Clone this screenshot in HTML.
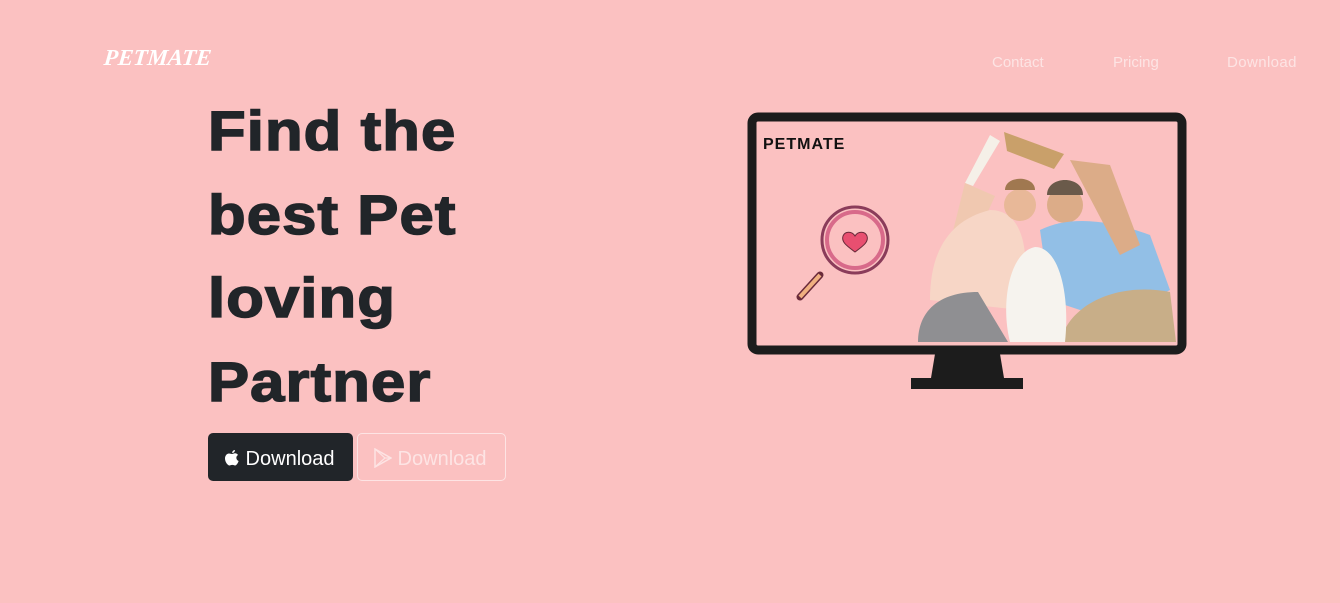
<!DOCTYPE html>
<html><head><style>
body{margin:0;width:1340px;height:603px;background:#fbc1c1;font-family:"Liberation Sans",sans-serif;overflow:hidden;position:relative}
.logo{position:absolute;left:104px;top:45px;color:#fff;font:italic bold 23px "Liberation Serif",serif;transform:skewX(-6deg)}
.nav a{position:absolute;top:54px;color:#fde4e4;font-size:15px;text-decoration:none}
h1{position:absolute;left:208px;top:89px;margin:0;font-size:56px;line-height:83.5px;font-weight:bold;color:#212529;letter-spacing:1px;transform:scaleX(1.1);transform-origin:left top;-webkit-text-stroke:1.5px #212529}
.b1{position:absolute;left:208px;top:433px;width:145px;height:48px;background:#212529;border-radius:5px;color:#fff;font-size:20px;box-sizing:border-box;padding:15px 0 0 16px}
.b2{position:absolute;left:357px;top:433px;width:149px;height:48px;border:1px solid #fde4e4;border-radius:5px;color:#fde4e4;font-size:20px;box-sizing:border-box;padding:14px 0 0 16px}
</style></head><body>
<div class="logo">PETMATE</div>
<div class="nav"><a style="left:992px">Contact</a><a style="left:1113px">Pricing</a><a style="left:1227px;letter-spacing:0.4px">Download</a></div>
<h1>Find the<br>best Pet<br>loving<br>Partner</h1>
<div class="b1"><svg width="16" height="18" viewBox="0 0 16 18" style="vertical-align:-2px"><path d="M11 1c0 1.5-1.2 3-2.8 3C8 2.5 9.4 1 11 1zM8 5c1 0 2-.7 3-.7 1.3 0 2.4.7 3 1.7-2.5 1.4-2 5 .6 6-.6 1.8-2 4.5-3.5 4.5-1 0-1.5-.6-2.8-.6s-1.9.6-2.8.6C3.800 16.500 1 13 1 9.500 1 6.500 3 4.500 5 4.500 6.200 4.500 7 5 8 5z" fill="#fff"/></svg> Download</div>
<div class="b2"><svg width="18" height="20" viewBox="0 0 18 20" style="vertical-align:-3px"><path d="M1 1l16 9-16 9z" fill="none" stroke="#fde4e4" stroke-width="1.5"/><path d="M1 1l10 9-10 9M11 10l6 0" stroke="#fde4e4" stroke-width="1.2" fill="none"/></svg> Download</div>
<svg style="position:absolute;left:0;top:0" width="1340" height="603">
<rect x="752" y="117" width="430" height="233" rx="6" fill="#fbc1c1" stroke="#1c1c1c" stroke-width="9"/>
<path d="M935 354h65l4 24h-73z" fill="#1c1c1c"/><rect x="911" y="378" width="112" height="11" fill="#1c1c1c"/>
<text x="763" y="149" font-family="Liberation Sans" font-weight="bold" font-size="16" fill="#111" letter-spacing="1">PETMATE</text>
<circle cx="855" cy="240" r="33" fill="#fbc1c1" stroke="#8a3c5a" stroke-width="3"/><circle cx="855" cy="240" r="28" fill="none" stroke="#d86a8a" stroke-width="4"/>
<path d="M855 252c-8-6-14-10-12-16 2-5 9-5 12 0 3-5 10-5 12 0 2 6-4 10-12 16z" fill="#e84f70" stroke="#6a2a3a"/>
<path d="M800 297l20-22" stroke="#6a2a3a" stroke-width="7" stroke-linecap="round"/><path d="M800 297l20-22" stroke="#f0b080" stroke-width="4"/>
<path d="M1004 132l60 22-10 15-47-18z" fill="#c9a06a"/><path d="M990 135l-25 48 8 3 27-45z" fill="#f5f0e8"/>
<path d="M965 183l-15 60 20 8 25-55z" fill="#f0c8b0"/>
<path d="M930 300c0-50 20-80 60-90 40 0 40 60 30 100z" fill="#f7d6c6"/>
<circle cx="1020" cy="205" r="16" fill="#e8b898"/><circle cx="1065" cy="205" r="18" fill="#dcac88"/>
<path d="M1005 190c0-15 30-15 30 0" fill="#a07850"/><path d="M1047 195c0-20 36-20 36 0" fill="#6a5a4a"/>
<path d="M1040 230c30-15 70-10 110 5l20 55-60 30-60-20z" fill="#92bfe6"/>
<path d="M1070 160l40 5 30 80-20 10z" fill="#dcac88"/>
<path d="M918 342c0-30 20-50 60-50l30 50z" fill="#8f8f92"/>
<path d="M1060 342c10-40 60-60 110-50l6 50z" fill="#c8ae88"/>
<path d="M1010 342c-10-40 0-90 25-95 25 0 35 50 30 95z" fill="#f6f3ee"/>
</svg>
</body></html>
